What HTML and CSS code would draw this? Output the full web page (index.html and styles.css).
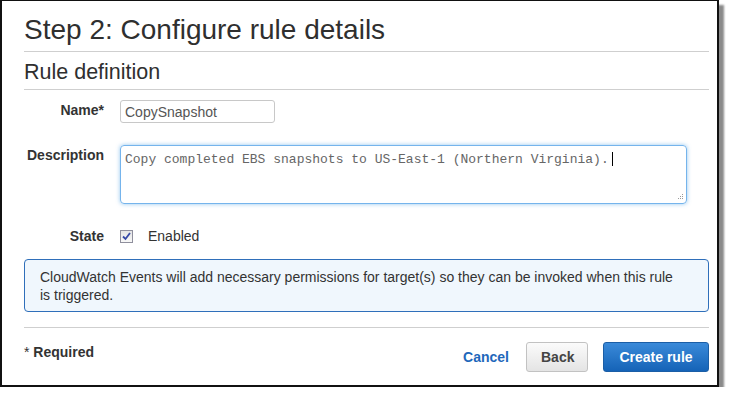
FILE: index.html
```html
<!DOCTYPE html>
<html lang="en">
<head>
    <meta charset="UTF-8">
    <meta name="viewport" content="width=device-width, initial-scale=1.0">
    <title>Configure rule details</title>
    <link rel="stylesheet" href="styles.css">
</head>
<body>
<div class="frame">
    <h1 class="page-title">Step 2: Configure rule details</h1>
    <h2 class="section-title">Rule definition</h2>

    <div class="row row-name">
        <label class="label" for="ruleName">Name*</label>
        <input class="text-input" type="text" id="ruleName" value="CopySnapshot">
    </div>

    <div class="row row-desc">
        <label class="label">Description</label>
        <div class="textarea">Copy completed EBS snapshots to US-East-1 (Northern Virginia).<span class="caret"></span>
            <svg class="grip" width="7" height="7" viewBox="0 0 7 7">
                <rect x="5" y="0" width="1" height="1" fill="#9a9a9a"/>
                <rect x="3" y="2" width="1" height="1" fill="#9a9a9a"/>
                <rect x="5" y="2" width="1" height="1" fill="#9a9a9a"/>
                <rect x="1" y="4" width="1" height="1" fill="#9a9a9a"/>
                <rect x="3" y="4" width="1" height="1" fill="#9a9a9a"/>
                <rect x="5" y="4" width="1" height="1" fill="#9a9a9a"/>
            </svg>
        </div>
    </div>

    <div class="row row-state">
        <label class="label">State</label>
        <div class="check">
            <span class="checkbox">
                <svg width="9" height="9" viewBox="0 0 9 9">
                    <path d="M1 4.5 L3.5 7 L8 1" fill="none" stroke="#3548a6" stroke-width="1.8"/>
                </svg>
            </span>
            <span class="check-text">Enabled</span>
        </div>
    </div>

    <div class="info">CloudWatch Events will add necessary permissions for target(s) so they can be invoked when this rule is triggered.</div>

    <div class="footer">
        <div class="required">* <b>Required</b></div>
        <div class="actions">
            <a class="cancel" href="#">Cancel</a>
            <button class="btn">Back</button>
            <button class="btn btn-primary">Create rule</button>
        </div>
    </div>
</div>
</body>
</html>
```

FILE: styles.css
```css
body{
    margin: 0;
    background: #fff;
    font-family: "Liberation Sans", Arial, sans-serif;
    color: #333;
}
.frame{
    box-sizing: border-box;
    width: 719px;
    height: 387px;
    padding: 0 8px 0 22px;
    border: 2px solid #111;
    border-top-width: 1px;
    background: #fff;
    box-shadow: 5px 5px 2px #8a8a8a;
}
.page-title{
    margin: 13px 0 0;
    padding-bottom: 5px;
    border-bottom: 1px solid #cfcfcf;
    font-size: 28px;
    line-height: 32px;
    font-weight: normal;
    color: #2f2f2f;
}
.section-title{
    margin: 7px 0 0;
    padding-bottom: 4px;
    border-bottom: 1px solid #cfcfcf;
    font-size: 21.5px;
    line-height: 26px;
    font-weight: normal;
    color: #2f2f2f;
}
.row{
    display: grid;
    grid-template-columns: 80px 1fr;
    column-gap: 16px;
    align-items: start;
}
.row-name{ margin-top: 10px; }
.row-desc{ margin-top: 22px; }
.row-state{ margin-top: 22px; }
.label{
    text-align: right;
    font-size: 14px;
    line-height: 20px;
    font-weight: bold;
    color: #333;
}
.text-input{
    box-sizing: border-box;
    width: 155px;
    height: 23px;
    padding: 1px 4px 0;
    border: 1px solid #c8c8c8;
    border-radius: 3px;
    font-family: "Liberation Sans", Arial, sans-serif;
    font-size: 14px;
    color: #555;
    outline: none;
}
.textarea{
    position: relative;
    box-sizing: border-box;
    width: 567px;
    height: 59px;
    padding: 5px 4px;
    border: 1px solid #75b4ec;
    border-radius: 4px;
    box-shadow: 0 0 4px rgba(102, 175, 233, 0.7);
    font-family: "Liberation Mono", "Courier New", monospace;
    font-size: 13px;
    line-height: 17px;
    color: #666;
}
.caret{
    display: inline-block;
    width: 1px;
    height: 14px;
    margin-left: 3px;
    vertical-align: -3px;
    background: #000;
}
.grip{
    position: absolute;
    right: 2px;
    bottom: 2px;
}
.check{
    display: flex;
    align-items: center;
    height: 20px;
}
.checkbox{
    box-sizing: border-box;
    display: flex;
    align-items: center;
    justify-content: center;
    width: 13px;
    height: 13px;
    margin-top: 1px;
    border: 1px solid #8f8f9d;
    background: linear-gradient(#e4e4e4, #f8f8f8);
}
.check-text{
    margin-left: 15px;
    font-size: 14px;
    color: #333;
}
.info{
    margin-top: 13px;
    padding: 8px 22px 7px 15px;
    border: 1px solid #2f6fba;
    border-radius: 4px;
    background: #f0f7fd;
    font-size: 14px;
    line-height: 18px;
    color: #333;
}
.footer{
    display: flex;
    justify-content: space-between;
    align-items: flex-start;
    margin-top: 15px;
    padding-top: 14px;
    border-top: 1px solid #cfcfcf;
}
.required{
    font-size: 14px;
    line-height: 20px;
    color: #333;
}
.actions{
    display: flex;
    align-items: center;
}
.cancel{
    margin-right: 17px;
    font-size: 14px;
    font-weight: bold;
    color: #1f68bb;
    text-decoration: none;
}
.btn{
    box-sizing: border-box;
    height: 30px;
    padding: 0 14px;
    border: 1px solid #c2c2c2;
    border-radius: 3px;
    background: linear-gradient(#fbfbfb, #e4e4e4);
    font-family: "Liberation Sans", Arial, sans-serif;
    font-size: 14px;
    font-weight: bold;
    color: #444;
}
.btn-primary{
    width: 106px;
    margin-left: 15px;
    border-color: #1b5ea6;
    background: linear-gradient(#3a8ad9, #1563b7);
    color: #fff;
}
.btn:first-of-type{
    width: 62px;
}
```
